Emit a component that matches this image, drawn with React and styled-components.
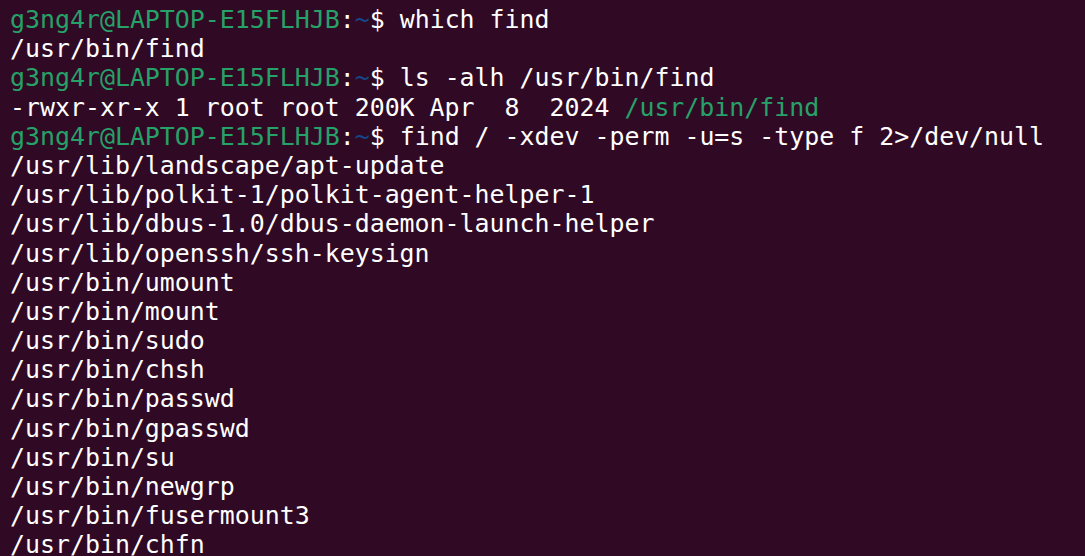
import React from "react";
import styled, { createGlobalStyle } from "styled-components";

const Global = createGlobalStyle`
  html, body { margin: 0; padding: 0; background: #300a24; }
  body { overflow: hidden; }
`;

const Terminal = styled.div`
  width: 1085px;
  height: 556px;
  background: #300a24;
  color: #ffffff;
  font-family: "DejaVu Sans Mono", "Liberation Mono", monospace;
  font-size: 24.9px;
  line-height: 29.2px;
  padding: 5px 0 0 10px;
  box-sizing: border-box;
  overflow: hidden;
  white-space: pre;
`;

const Line = styled.div`
  height: 29.2px;
`;

const User = styled.span`
  color: #26a269;
`;
const Path = styled.span`
  color: #12488b;
`;
const Exec = styled.span`
  color: #26a269;
`;

const Prompt = ({ cmd }) => (
  <Line>
    <User>g3ng4r@LAPTOP-E15FLHJB</User>:<Path>~</Path>$ {cmd}
  </Line>
);

const results = [
  "/usr/lib/landscape/apt-update",
  "/usr/lib/polkit-1/polkit-agent-helper-1",
  "/usr/lib/dbus-1.0/dbus-daemon-launch-helper",
  "/usr/lib/openssh/ssh-keysign",
  "/usr/bin/umount",
  "/usr/bin/mount",
  "/usr/bin/sudo",
  "/usr/bin/chsh",
  "/usr/bin/passwd",
  "/usr/bin/gpasswd",
  "/usr/bin/su",
  "/usr/bin/newgrp",
  "/usr/bin/fusermount3",
  "/usr/bin/chfn",
];

export default function App() {
  return (
    <>
      <Global />
      <Terminal>
        <Prompt cmd="which find" />
        <Line>/usr/bin/find</Line>
        <Prompt cmd="ls -alh /usr/bin/find" />
        <Line>
          -rwxr-xr-x 1 root root 200K Apr  8  2024 <Exec>/usr/bin/find</Exec>
        </Line>
        <Prompt cmd="find / -xdev -perm -u=s -type f 2>/dev/null" />
        {results.map((r) => (
          <Line key={r}>{r}</Line>
        ))}
      </Terminal>
    </>
  );
}
